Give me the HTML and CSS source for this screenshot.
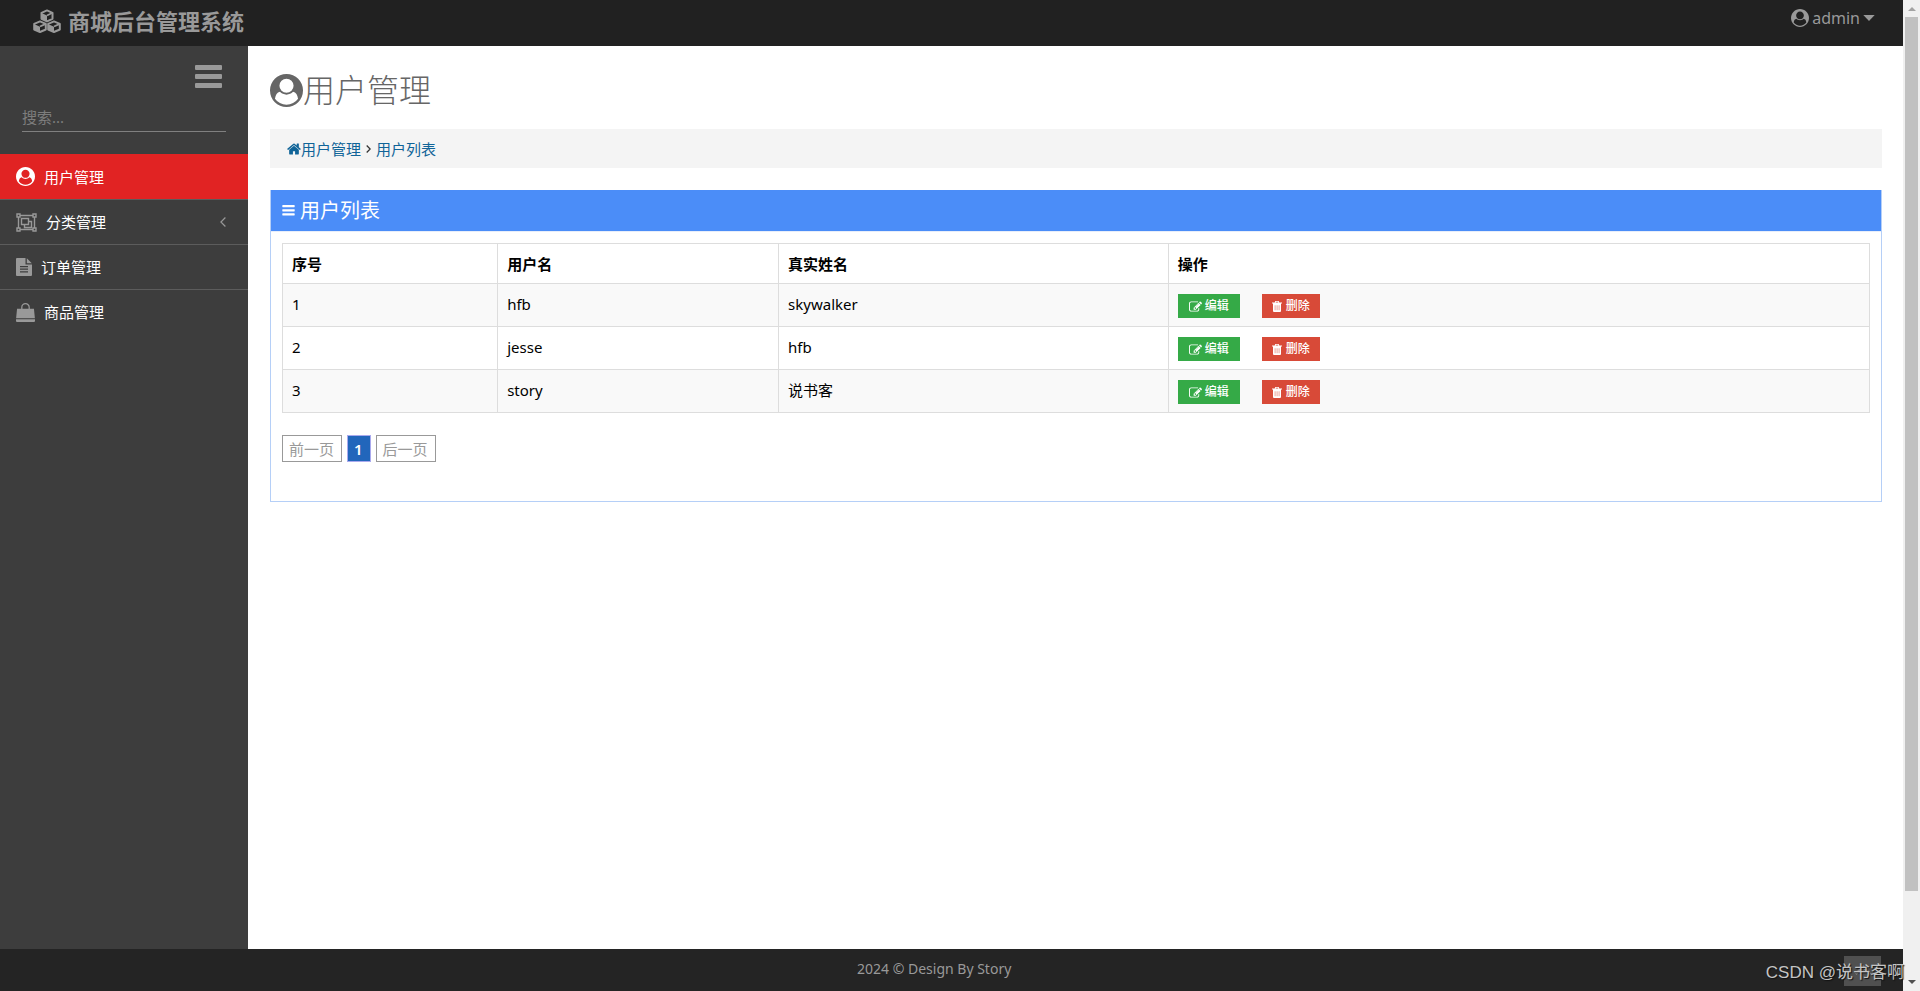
FILE: index.html
```html
<!DOCTYPE html>
<html lang="zh-CN">
<head>
<meta charset="utf-8">
<title>商城后台管理系统</title>
<link rel="stylesheet" href="styles.css">
</head>
<body>
<svg class="sprite" aria-hidden="true">
  <symbol id="i-user" viewBox="0 0 1792 1792"><path fill="currentColor" fill-rule="evenodd" d="M1523 1339q-22-155-87.500-257.500t-184.500-118.500q-67 74-159.500 115.500t-195.500 41.500-195.500-41.500-159.500-115.500q-119 16-184.500 118.500t-87.500 257.500q106 150 271 237.500t356 87.500 356-87.500 271-237.500zm-243-699q0-159-112.500-271.500t-271.500-112.500-271.500 112.500-112.500 271.500 112.500 271.500 271.500 112.500 271.500-112.500 112.500-271.500zm512 256q0 182-71 347.500t-190.500 286-285.500 191.500-349 71-348-71-286-191-191-286-71-348 71-348 191-286 286-191 348-71 348 71 286 191 191 286 71 348z"/></symbol>
  <symbol id="i-cubes" viewBox="0 0 28 24"><g fill="none" stroke="currentColor" stroke-width="2" stroke-linejoin="round"><path d="M14 1.400l5.500 2.400v6L14 12.400 8.500 9.800v-6zM7 12.400l5.800 2.500v5.600L7 23l-5.800-2.500v-5.600zM21 12.400l5.800 2.500v5.600L21 23l-5.800-2.500v-5.600z"/></g><path fill="currentColor" d="M8 3.800l6 2.700v6l-6-2.700zM1 15l6 2.700V23l-6-2.500zM15 15l6 2.700V23l-6-2.500z"/><path fill="none" stroke="currentColor" stroke-width="1.800" d="M14 6.500l5.500-2.700M7 17.500l5.800-2.600M21 17.500l5.800-2.600"/></symbol>
  <symbol id="i-group" viewBox="0 0 21 19"><g fill="none" stroke="currentColor" stroke-width="1.400"><path d="M2.500 4v11M18.500 4v11M4 2.500h13M4 16.500h13M5.500 5.500h7v6h-7zM12.500 8.500h3v6h-7v-3"/><path d="M1 1h3v3H1zM17 1h3v3h-3zM1 15h3v3H1zM17 15h3v3h-3z"/></g></symbol>
  <symbol id="i-file" viewBox="0 0 16 18"><path fill="currentColor" fill-rule="evenodd" d="M1 0h8.500v6.500H16V17q0 1-1 1H1q-1 0-1-1V1q0-1 1-1zM4 8v1.200h8V8zM4 10.600v1.200h8v-1.200zM4 13.200v1.200h8v-1.200z"/><path fill="currentColor" d="M10.800.2l5 5h-5z"/></symbol>
  <symbol id="i-bag" viewBox="0 0 18 18"><path fill="currentColor" d="M1 5.500h16l.9 9H.1zM0 15.300h18V17q0 1-1 1H1q-1 0-1-1z"/><path fill="none" stroke="currentColor" stroke-width="1.200" d="M5.500 7.500V4a3.500 3.400 0 0 1 7 0v3.500"/></symbol>
  <symbol id="i-bars" viewBox="0 0 27 24"><path fill="currentColor" d="M1 0h25q1 0 1 1v3q0 1-1 1H1Q0 5 0 4V1q0-1 1-1zM1 9h25q1 0 1 1v3q0 1-1 1H1q-1 0-1-1v-3q0-1 1-1zM1 18h25q1 0 1 1v3q0 1-1 1H1q-1 0-1-1v-3q0-1 1-1z"/></symbol>
  <symbol id="i-home" viewBox="64 256 1664 1280"><path fill="currentColor" d="M1472 992v480q0 26-19 45t-45 19h-384v-384h-256v384h-384q-26 0-45-19t-19-45v-480q0-1 .5-3t.5-3l575-474 575 474q1 2 1 6zm223-69l-62 74q-8 9-21 11h-3q-13 0-21-7l-692-577-692 577q-12 8-24 7-13-2-21-11l-62-74q-8-10-7-23.500t11-21.500l719-599q32-26 76-26t76 26l244 204v-195q0-14 9-23t23-9h192q14 0 23 9t9 23v408l219 182q10 8 11 21.500t-7 23.500z"/></symbol>
  <symbol id="i-edit" viewBox="0 128 1792 1408"><path fill="currentColor" fill-rule="evenodd" d="M888 1184l116-116-152-152-116 116v56h96v96h56zm440-720q-16-16-33 1l-350 350q-17 17-1 33t33-1l350-350q17-17 1-33zm80 594v190q0 119-84.500 203.500t-203.500 84.500h-832q-119 0-203.500-84.500t-84.500-203.500v-832q0-119 84.500-203.500t203.500-84.500h832q63 0 117 25 15 7 18 23 3 17-9 29l-49 49q-14 14-32 8-23-6-45-6h-832q-66 0-113 47t-47 113v832q0 66 47 113t113 47h832q66 0 113-47t47-113v-126q0-13 9-22l64-64q15-15 35-7t20 29zm-96-738l288 288-672 672h-288v-288zm444 132l-92 92-288-288 92-92q28-28 68-28t68 28l152 152q28 28 28 68t-28 68z"/></symbol>
  <symbol id="i-trash" viewBox="0 0 10 11"><path fill="currentColor" fill-rule="evenodd" d="M0 1.600h2.700L3.300 0h3.400l.6 1.600H10v1H0zM4 .8l-.3.800h2.600L6 .8zM1 2.500h8V10q0 1-1 1H2q-1 0-1-1zM2.800 4.200v5h.5v-5zM4.800 4.200v5h.5v-5zM6.800 4.200v5h.5v-5z"/></symbol>
  <symbol id="i-left" viewBox="0 0 6 10"><path fill="none" stroke="currentColor" stroke-width="1.200" d="M5.400.5L.9 5l4.500 4.500"/></symbol>
  <symbol id="i-right" viewBox="0 0 5 8"><path fill="none" stroke="currentColor" stroke-width="1.300" d="M.7.500L4.200 4 .7 7.500"/></symbol>
  <symbol id="i-down" viewBox="0 0 12 6"><path fill="currentColor" d="M.3 0h11.400L6 6z"/></symbol>
  <symbol id="i-up" viewBox="0 0 22 14"><path fill="none" stroke="currentColor" stroke-width="3" d="M2 12l9-9 9 9"/></symbol>
</svg>
<div class="viewport">
  <div class="page">
    <header class="topbar">
      <a class="brand" href="#"><svg class="brand-icon"><use href="#i-cubes"/></svg>商城后台管理系统</a>
      <button class="account" type="button"><svg class="icon-18"><use href="#i-user"/></svg>admin<svg class="caret"><use href="#i-down"/></svg></button>
    </header>
    <div class="columns">
      <nav class="sidebar" aria-label="主菜单">
        <button class="toggle" type="button" aria-label="折叠菜单"><svg><use href="#i-bars"/></svg></button>
        <input class="search" type="text" placeholder="搜索..." aria-label="搜索">
        <ul class="menu">
          <li><a class="active" href="#"><svg class="icon-19"><use href="#i-user"/></svg>用户管理</a></li>
          <li><a href="#"><svg class="icon-group"><use href="#i-group"/></svg>分类管理<svg class="arrow"><use href="#i-left"/></svg></a></li>
          <li><a href="#"><svg class="icon-file"><use href="#i-file"/></svg>订单管理</a></li>
          <li><a href="#"><svg class="icon-19"><use href="#i-bag"/></svg>商品管理</a></li>
        </ul>
      </nav>
      <main class="content">
        <h1><svg><use href="#i-user"/></svg>用户管理</h1>
        <nav class="crumbs" aria-label="位置"><a href="#"><svg class="home"><use href="#i-home"/></svg>用户管理</a><svg class="sep"><use href="#i-right"/></svg><a href="#">用户列表</a></nav>
        <section class="panel">
          <h2><svg><use href="#i-bars"/></svg>用户列表</h2>
          <div class="panel-body">
            <table>
              <colgroup><col class="c1"><col class="c2"><col class="c3"><col></colgroup>
              <thead><tr><th>序号</th><th>用户名</th><th>真实姓名</th><th>操作</th></tr></thead>
              <tbody>
                <tr><td>1</td><td>hfb</td><td>skywalker</td><td><div class="actions"><button class="edit" type="button"><svg><use href="#i-edit"/></svg>编辑</button><button class="delete" type="button"><svg><use href="#i-trash"/></svg>删除</button></div></td></tr>
                <tr><td>2</td><td>jesse</td><td>hfb</td><td><div class="actions"><button class="edit" type="button"><svg><use href="#i-edit"/></svg>编辑</button><button class="delete" type="button"><svg><use href="#i-trash"/></svg>删除</button></div></td></tr>
                <tr><td>3</td><td>story</td><td>说书客</td><td><div class="actions"><button class="edit" type="button"><svg><use href="#i-edit"/></svg>编辑</button><button class="delete" type="button"><svg><use href="#i-trash"/></svg>删除</button></div></td></tr>
              </tbody>
            </table>
            <nav class="pager" aria-label="分页"><a href="#">前一页</a><a class="current" href="#">1</a><a href="#">后一页</a></nav>
          </div>
        </section>
      </main>
    </div>
    <footer class="footer">2024 © Design By Story
      <button class="to-top" type="button" aria-label="返回顶部"><svg><use href="#i-up"/></svg></button>
    </footer>
  </div>
  <div class="scrollbar" aria-hidden="true"><span class="up"></span><span class="thumb"></span><span class="down"></span></div>
  <div class="watermark">CSDN @说书客啊</div>
</div>
</body>
</html>
```
FILE: styles.css
```css
* { box-sizing: border-box; }
body { margin: 0; font: 15px/20px "Noto Sans", "Noto Sans CJK SC", sans-serif; color: #000; background: #fff; }
a { color: inherit; text-decoration: none; }
button { font: inherit; color: inherit; background: none; border: 0; padding: 0; cursor: pointer; }
svg { flex: none; }
.sprite { position: absolute; width: 0; height: 0; }
.viewport { display: flex; min-height: 100vh; position: relative; }
.page { flex: 1; display: flex; flex-direction: column; min-width: 0; }
.topbar { display: flex; justify-content: space-between; align-items: flex-start; height: 46px; padding: 0 28px 0 33px; background: #212121; color: #999; }
.brand { display: flex; align-items: center; gap: 7px; height: 42px; font-size: 22px; font-weight: 700; }
.brand-icon { width: 28px; height: 24px; }
.account { display: flex; align-items: center; gap: 3px; height: 36px; font-size: 16px; }
.icon-18 { width: 18px; height: 18px; }
.caret { width: 12px; height: 6px; }
.columns { flex: 1; display: flex; }
.sidebar { width: 248px; background: #3d3d3d; color: #fff; }
.toggle { display: block; margin: 19px 26px 0 auto; height: 24px; color: #999; }
.toggle svg { display: block; width: 27px; height: 24px; }
.search { display: block; width: 204px; height: 30px; margin: 13px 22px 22px; padding: 0; border: 0; border-bottom: 1px solid #808080; background: none; font: inherit; color: #fff; outline: 0; }
.search::placeholder { color: #7d7d7d; opacity: 1; }
.menu { list-style: none; margin: 0; padding: 0; }
.menu a { display: flex; align-items: center; gap: 9px; height: 45px; padding: 0 22px 0 16px; }
.menu li + li a { border-top: 1px solid #5c5c5c; }
.menu svg { color: #999; }
.menu .active { background: #e12323; }
.menu .active svg { color: #fff; }
.icon-19 { width: 19px; height: 19px; }
.icon-group { width: 21px; height: 19px; }
.icon-file { width: 16px; height: 18px; }
.arrow { width: 6px; height: 10px; margin-left: auto; }
.content { flex: 1; padding: 22px 21px 22px 22px; min-width: 0; }
h1 { display: flex; align-items: center; height: 44px; margin: 0 0 17px; font-size: 32px; line-height: 44px; font-weight: 300; color: #666; }
h1 svg { width: 33px; height: 33px; }
.crumbs { display: flex; align-items: center; height: 39px; padding: 0 17px; background: #f4f4f4; color: #333; }
.crumbs a { display: flex; align-items: center; color: #106498; }
.home { width: 14px; height: 12px; }
.sep { width: 5px; height: 8px; margin: 0 5px; }
.panel { margin-top: 22px; border: 1px solid #b5cff7; border-top: 0; }
h2 { display: flex; align-items: center; gap: 5px; height: 42px; margin: 0; padding: 0 11px; background: #4b8df8; border-bottom: 1px solid #e8eefa; color: #fff; font-size: 20px; font-weight: 400; }
h2 svg { width: 13px; height: 11px; }
.panel-body { padding: 11px 11px 39px; }
table { width: 100%; table-layout: fixed; border-collapse: collapse; }
.c1 { width: 13.56%; }
.c2 { width: 17.7%; }
.c3 { width: 24.56%; }
th, td { border: 1px solid #ddd; padding: 0 9px; text-align: left; }
th { height: 40px; font-weight: 700; }
td { height: 43px; padding-bottom: 2px; }
tbody tr:nth-child(odd) { background: #f9f9f9; }
.actions { display: flex; gap: 22px; padding-top: 4px; }
.actions button { display: flex; align-items: center; gap: 3px; height: 24px; padding: 0 11px; color: #fff; font-size: 12px; font-weight: 500; }
.actions .edit { background: #35aa47; }
.actions .delete { background: #d84a38; gap: 4px; padding: 0 10px; }
.edit svg { width: 13px; height: 11px; }
.delete svg { width: 10px; height: 11px; }
.pager { display: flex; gap: 5px; margin-top: 22px; }
.pager a { height: 27px; padding: 0 7px 0 6px; border: 1px solid #999; color: #999; line-height: 26px; }
.pager .current { background: #2266bb; border-color: #aaaaee; color: #fff; font-weight: 600; }
.footer { position: relative; height: 42px; padding-left: 857px; background: #242424; color: #999; font-size: 14px; line-height: 40px; }
.to-top { position: absolute; right: 22px; top: 7px; width: 37px; height: 30px; background: #505050; color: #888; line-height: 20px; }
.to-top svg { width: 18px; height: 12px; }
.scrollbar { width: 17px; display: flex; flex-direction: column; align-items: center; background: #f0f0f0; }
.scrollbar .up { width: 0; height: 0; margin: 7px 0 6px; border: 4px solid transparent; border-top: 0; border-bottom-color: #a3a3a3; }
.scrollbar .thumb { flex: 1; width: 13px; background: #c1c1c1; margin-bottom: 89px; }
.scrollbar .down { width: 0; height: 0; margin-bottom: 7px; border: 4px solid transparent; border-bottom: 0; border-top-color: #505050; }
.watermark { position: absolute; right: 16px; bottom: 7px; color: #c4c4c4; font: 17px/22px "Liberation Sans", "Noto Sans CJK SC", sans-serif; text-shadow: 1px 1px 1px #111; pointer-events: none; }
```
